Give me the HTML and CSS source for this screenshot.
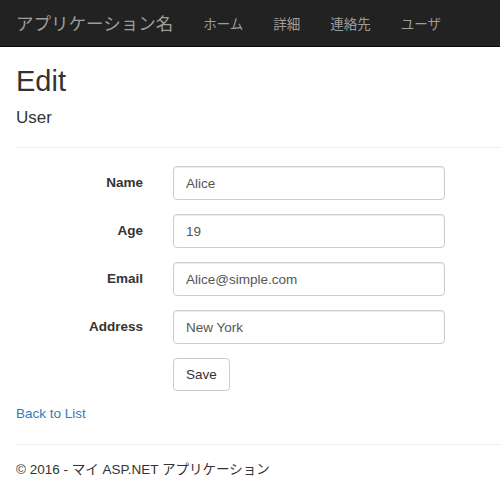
FILE: index.html
```html
<!DOCTYPE html>
<html>
<head>
  <meta charset="utf-8">
  <title>Edit - マイ ASP.NET アプリケーション</title>
  <link rel="stylesheet" href="styles.css">
</head>
<body>
  <header class="navbar">
    <a class="navbar-brand" href="#">アプリケーション名</a>
    <ul class="navbar-nav">
      <li><a href="#">ホーム</a></li>
      <li><a href="#">詳細</a></li>
      <li><a href="#">連絡先</a></li>
      <li><a href="#">ユーザ</a></li>
    </ul>
  </header>

  <div class="body-content">
    <h2 class="page-title">Edit</h2>
    <h4 class="page-subtitle">User</h4>
    <hr>

    <form class="form-horizontal">
      <div class="form-group">
        <label class="control-label">Name</label>
        <input class="form-control" type="text" value="Alice">
      </div>
      <div class="form-group">
        <label class="control-label">Age</label>
        <input class="form-control" type="text" value="19">
      </div>
      <div class="form-group">
        <label class="control-label">Email</label>
        <input class="form-control" type="text" value="Alice@simple.com">
      </div>
      <div class="form-group">
        <label class="control-label">Address</label>
        <input class="form-control" type="text" value="New York">
      </div>
      <div class="form-group">
        <span class="control-label"></span>
        <button class="btn" type="button">Save</button>
      </div>
    </form>

    <div class="back-link">
      <a href="#">Back to List</a>
    </div>

    <hr class="footer-rule">
    <footer>
      <p>&copy; 2016 - マイ ASP.NET アプリケーション</p>
    </footer>
  </div>
</body>
</html>
```

FILE: styles.css
```css
body {
  margin: 0;
  font-family: "Liberation Sans", "Noto Sans CJK JP", sans-serif;
  font-size: 13.5px;
  line-height: 20px;
  color: #333;
  background: #fff;
}

a {
  color: #337ab7;
  text-decoration: none;
}

.navbar {
  display: flex;
  align-items: center;
  height: 46px;
  background-color: #222;
  border-bottom: 1px solid #080808;
  padding-left: 16px;
}

.navbar-brand {
  font-family: "Noto Sans CJK JP", sans-serif;
  font-size: 17.5px;
  color: #9d9d9d;
  margin-right: 15px;
}

.navbar-nav {
  display: flex;
  list-style: none;
  margin: 0;
  padding: 0;
}

.navbar-nav a {
  display: block;
  padding: 0 15px;
  font-family: "Noto Sans CJK JP", sans-serif;
  font-size: 13.5px;
  color: #9d9d9d;
}

.body-content {
  padding-left: 16px;
}

.page-title {
  font-size: 29px;
  font-weight: 500;
  line-height: 33px;
  margin: 18px 0 0;
}

.page-subtitle {
  font-size: 17px;
  font-weight: 500;
  line-height: 19px;
  margin: 10px 0 0;
}

hr {
  border: 0;
  border-top: 1px solid #eee;
  margin: 20px 0 18px;
}

.form-group {
  display: flex;
  align-items: center;
  margin-bottom: 14px;
}

.control-label {
  width: 127px;
  margin-right: 30px;
  text-align: right;
  font-weight: bold;
  font-size: 13.5px;
}

.form-control {
  box-sizing: border-box;
  width: 272px;
  height: 34px;
  padding: 6px 12px;
  font-family: inherit;
  font-size: 13.5px;
  color: #555;
  background: #fff;
  border: 1px solid #ccc;
  border-radius: 4px;
  box-shadow: inset 0 1px 1px rgba(0, 0, 0, .075);
}

.btn {
  height: 33px;
  padding: 6px 12px;
  font-family: inherit;
  font-size: 13.5px;
  color: #333;
  background: #fff;
  border: 1px solid #ccc;
  border-radius: 4px;
}

.back-link {
  margin-top: -1px;
}

.footer-rule {
  margin: 20px 0 0;
}

footer p {
  margin: 15px 0 0;
}
```
